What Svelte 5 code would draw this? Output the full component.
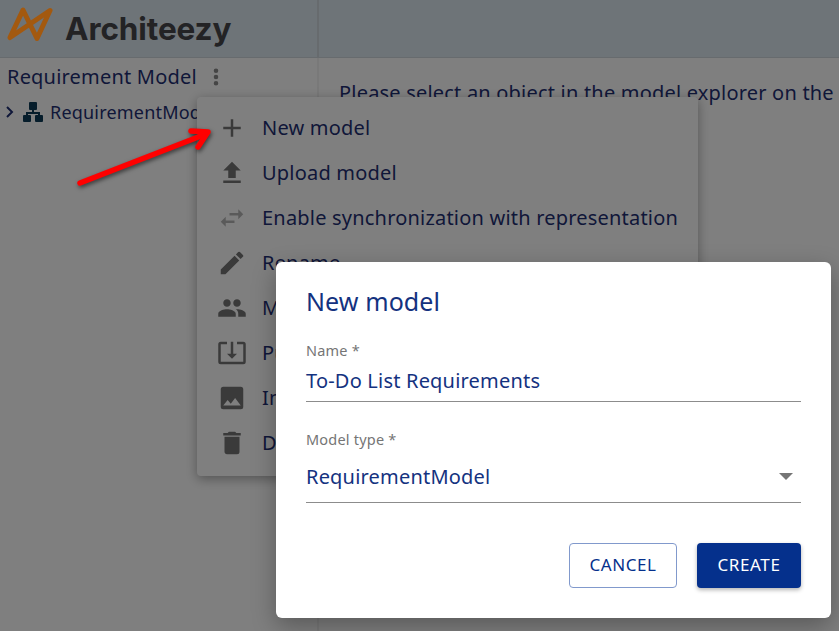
<script>
	const menu = [
		{ label: 'New model', d: 'M19 13h-6v6h-2v-6H5v-2h6V5h2v6h6v2z' },
		{ label: 'Upload model', d: 'M5 20h14v-2H5v2zm0-10h4v6h6v-6h4l-7-7-7 7z' },
		{ label: 'Enable synchronization with representation', d: 'M6.99 11 3 15l3.99 4v-3H14v-2H6.99v-3zM21 9l-3.99-4v3H10v2h7.01v3L21 9z', faded: true },
		{ label: 'Rename', d: 'M3 17.25V21h3.75L17.81 9.94l-3.75-3.75L3 17.25zM20.71 7.04a1 1 0 0 0 0-1.41l-2.34-2.34a1 1 0 0 0-1.41 0l-1.83 1.83 3.75 3.75 1.83-1.83z' },
		{ label: 'Manage', d: 'M16 11c1.66 0 2.99-1.34 2.99-3S17.66 5 16 5s-3 1.34-3 3 1.34 3 3 3zm-8 0c1.66 0 2.99-1.34 2.99-3S9.66 5 8 5 5 6.34 5 8s1.34 3 3 3zm0 2c-2.33 0-7 1.17-7 3.5V19h14v-2.5C15 14.17 10.33 13 8 13zm8 0c-.29 0-.62.02-.97.05 1.16.84 1.97 1.97 1.97 3.45V19h6v-2.5c0-2.33-4.67-3.5-7-3.5z' },
		{ label: 'Publish', d: 'M16 3v2h5v14H3V5h5V3H3a2 2 0 0 0-2 2v14a2 2 0 0 0 2 2h18a2 2 0 0 0 2-2V5a2 2 0 0 0-2-2h-5zM13 3h-2v9.500H8l4 4 4-4h-3z' },
		{ label: 'Image', d: 'M21 19V5a2 2 0 0 0-2-2H5a2 2 0 0 0-2 2v14a2 2 0 0 0 2 2h14a2 2 0 0 0 2-2zM8.5 13.5l2.5 3 3.5-4.5 4.5 6H5l3.5-4.5z' },
		{ label: 'Delete', d: 'M6 19c0 1.100.9 2 2 2h8a2 2 0 0 0 2-2V7H6v12zM19 4h-3.5l-1-1h-5l-1 1H5v2h14V4z' }
	];
</script>

<div class="page">
	<header class="topbar">
		<div class="brand">
			<svg class="logo" viewBox="0 0 50 44" width="50" height="44" aria-hidden="true">
				<path d="M4 30.500 17 3 31 31.500 44 3.500z" fill="none" stroke="#a3590f" stroke-width="5" stroke-linejoin="round" stroke-linecap="round" />
			</svg>
			<span class="wordmark">Architeezy</span>
		</div>
		<div class="topbar-rest"></div>
	</header>

	<div class="body">
		<aside class="explorer">
			<div class="explorer-head">
				<span class="explorer-title">Requirement Model</span>
				<svg viewBox="0 0 24 24" width="24" height="24" aria-hidden="true">
					<path fill="#8a8a8a" d="M12 8a2.300 2.300 0 1 0 0-4.600A2.300 2.300 0 0 0 12 8zm0 1.700a2.300 2.300 0 1 0 0 4.600 2.300 2.300 0 0 0 0-4.600zm0 6.300a2.300 2.300 0 1 0 0 4.600 2.300 2.300 0 0 0 0-4.600z" />
				</svg>
			</div>
			<div class="tree-row">
				<svg class="chevron" viewBox="0 0 10 14" width="10" height="14" aria-hidden="true">
					<path d="M2 2l5 5-5 5" fill="none" stroke="#1f2f73" stroke-width="2" />
				</svg>
				<svg viewBox="0 0 20 20" width="20" height="20" fill="#0c3a56" aria-hidden="true">
					<rect x="6" y="0" width="8" height="8" rx="1" />
					<rect x="9" y="8" width="2" height="3" />
					<rect x="3" y="10" width="14" height="2" />
					<rect x="3" y="11" width="2" height="3" />
					<rect x="15" y="11" width="2" height="3" />
					<rect x="0" y="13" width="8" height="7" rx="1" />
					<rect x="12" y="13" width="8" height="7" rx="1" />
				</svg>
				<span class="tree-label">RequirementModel</span>
			</div>
		</aside>
		<main class="content">
			<p>Please select an object in the model explorer on the left</p>
		</main>
	</div>

	<ul class="menu">
		{#each menu as item}
			<li class="menu-item">
				<svg class:faded={item.faded} viewBox="0 0 24 24" width="30" height="30" aria-hidden="true">
					<path d={item.d} />
				</svg>
				<span>{item.label}</span>
			</li>
		{/each}
	</ul>

	<div class="backdrop"></div>

	<svg class="arrow" viewBox="0 0 140 70" width="140" height="70" aria-hidden="true">
		<path d="M3 58 129 9" fill="none" stroke="#ff0000" stroke-width="5.500" stroke-linecap="round" />
		<path d="M114 6 131 7 121 22" fill="none" stroke="#ff0000" stroke-width="5.500" stroke-linecap="round" stroke-linejoin="round" />
	</svg>

	<section class="dialog">
		<h2>New model</h2>
		<div class="field first">
			<span class="field-label">Name *</span>
			<div class="field-value">To-Do List Requirements</div>
		</div>
		<div class="field second">
			<span class="field-label">Model type *</span>
			<div class="field-value select">
				RequirementModel
				<svg viewBox="0 0 14 7" width="14" height="7" aria-hidden="true"><path fill="#757575" d="M0 0h14L7 7z" /></svg>
			</div>
		</div>
		<div class="actions">
			<button class="btn outline">CANCEL</button>
			<button class="btn solid">CREATE</button>
		</div>
	</section>
</div>

<style>
	:global(body) {
		margin: 0;
		background: #fff;
	}

	.page {
		position: relative;
		width: 839px;
		height: 631px;
		overflow: hidden;
		background: #fff;
		font-family: "Noto Sans", "Open Sans", sans-serif;
		letter-spacing: 0.2px;
		color: #1f2f73;
	}

	.topbar {
		display: flex;
		height: 57px;
		background: #dde8f1;
		border-bottom: 1px solid #cfd6dc;
	}

	.brand {
		display: flex;
		align-items: center;
		gap: 9px;
		width: 319px;
		padding-left: 6px;
		box-sizing: border-box;
		border-right: 2px solid #cfd6dc;
	}

	.logo {
		position: relative;
		z-index: 1;
	}

	.wordmark {
		font-family: Inter, "Noto Sans", sans-serif;
		font-size: 31.5px;
		font-weight: 700;
		letter-spacing: -0.1px;
		color: #46464a;
	}

	.body {
		display: flex;
		height: 573px;
	}

	.explorer {
		width: 319px;
		box-sizing: border-box;
		flex-shrink: 0;
		border-right: 2px solid #f2f2f2;
	}

	.explorer-head {
		display: flex;
		align-items: center;
		gap: 7px;
		padding: 5px 0 0 7px;
		height: 27px;
	}

	.explorer-title {
		font-size: 20px;
	}

	.tree-row {
		display: flex;
		align-items: center;
		gap: 7px;
		margin-top: 9px;
		padding-left: 5px;
		height: 26px;
	}

	.tree-row svg {
		flex-shrink: 0;
	}

	.chevron {
		margin-right: 1px;
	}

	.tree-label {
		font-size: 18px;
		white-space: nowrap;
	}

	.content {
		padding: 0 0 0 20px;
		white-space: nowrap;
		font-size: 20px;
	}

	.content p {
		margin: 21px 0 0;
	}

	.menu {
		position: absolute;
		left: 197px;
		top: 97px;
		width: 501px;
		height: 379px;
		margin: 0;
		padding: 8px 0;
		box-sizing: border-box;
		list-style: none;
		background: #fff;
		border-radius: 4px;
		box-shadow: 0 3px 12px rgba(0, 0, 0, 0.35);
	}

	.menu-item {
		display: flex;
		align-items: center;
		gap: 15px;
		height: 45px;
		padding-left: 20px;
		font-size: 20px;
		white-space: nowrap;
	}

	.menu-item svg {
		fill: #757575;
	}

	.menu-item svg.faded {
		fill: #b5b5b5;
	}

	.backdrop {
		position: absolute;
		inset: 0;
		background: rgba(0, 0, 0, 0.5);
	}

	.arrow {
		position: absolute;
		left: 77px;
		top: 125px;
		filter: drop-shadow(1px 2px 2px rgba(0, 0, 0, 0.55));
	}

	.dialog {
		position: absolute;
		left: 276px;
		top: 262px;
		width: 555px;
		height: 356px;
		box-sizing: border-box;
		padding: 23px 30px 0;
		background: #fff;
		border-radius: 6px;
		box-shadow: 0 8px 24px rgba(0, 0, 0, 0.3);
		color: #14327f;
	}

	h2 {
		margin: 0;
		font-size: 25px;
		line-height: 33px;
		font-weight: 400;
		letter-spacing: 0.1px;
	}

	.field {
		display: flex;
		flex-direction: column;
	}

	.field.first {
		margin-top: 23px;
	}

	.field.second {
		margin-top: 28px;
	}

	.field-label {
		font-size: 14.5px;
		line-height: 19px;
		color: #757575;
	}

	.field-value {
		display: flex;
		align-items: center;
		justify-content: space-between;
		font-size: 20px;
		line-height: 27px;
		margin-top: 7px;
		padding-bottom: 7px;
		border-bottom: 1px solid #8c8c8c;
	}

	.field-value.select {
		margin-top: 14px;
		padding-bottom: 12px;
		padding-right: 8px;
	}

	.actions {
		display: flex;
		justify-content: flex-end;
		gap: 20px;
		margin-top: 40px;
	}

	.btn {
		height: 45px;
		box-sizing: border-box;
		padding: 0 0 2px;
		border-radius: 4px;
		font-family: inherit;
		font-size: 17px;
		letter-spacing: 0.6px;
	}

	.outline {
		width: 108px;
		background: #fff;
		color: #05308c;
		border: 1px solid #8199cc;
	}

	.solid {
		width: 104px;
		background: #05308c;
		color: #fff;
		border: none;
		box-shadow: 0 2px 4px rgba(0, 0, 0, 0.3);
	}
</style>
